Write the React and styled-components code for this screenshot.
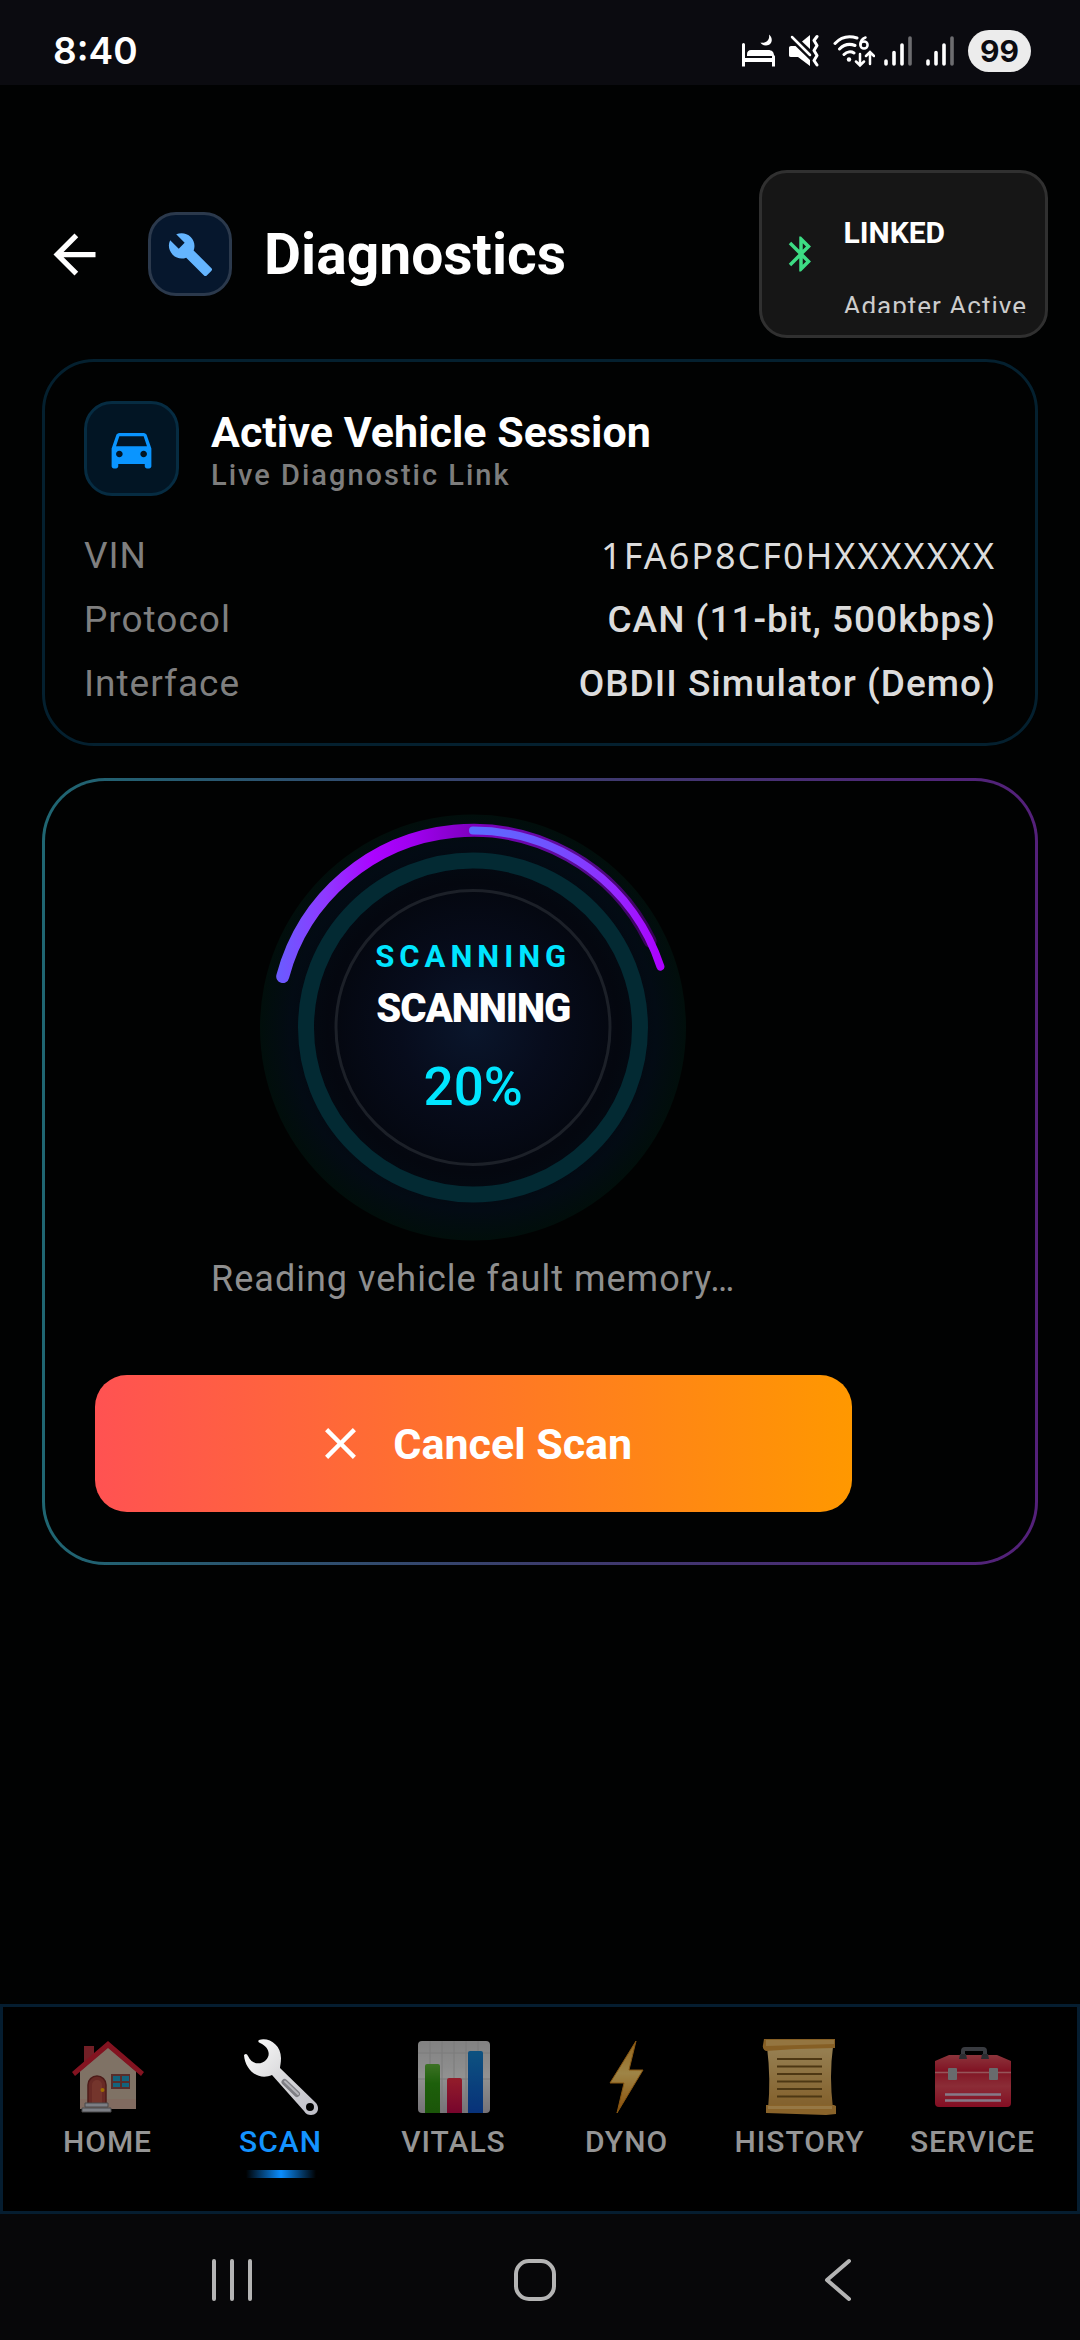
import React from 'react';
import styled, { createGlobalStyle, css } from 'styled-components';

const GlobalStyle = createGlobalStyle`
  *, *::before, *::after { box-sizing: border-box; }
  body {
    margin: 0;
    background: #010202;
    color: #ffffff;
    font-family: Roboto, "Liberation Sans", sans-serif;
  }
  button { font: inherit; color: inherit; border: 0; padding: 0; background: none; }
  h1, h2, p, dl, dd, dt { margin: 0; }
  svg { display: block; flex: none; }
`;

const Screen = styled.div`
  min-height: 100vh;
  display: flex;
  flex-direction: column;
`;

/* ---------- system status bar ---------- */

const StatusBar = styled.div`
  height: 85px;
  padding: 17px 49px 0 53px;
  display: flex;
  align-items: center;
  justify-content: space-between;
  background: #0b0b10;
`;

const Clock = styled.time`
  font-family: Inter, Roboto, sans-serif;
  font-size: 37px;
  line-height: 48px;
  font-weight: 600;
`;

const StatusIcons = styled.div`
  display: flex;
  align-items: center;
  gap: ${(p) => p.$gap}px;
`;

const Battery = styled.span`
  width: 63px;
  height: 42px;
  border-radius: 21px;
  background: #ececec;
  color: #0b0b10;
  font-family: Inter, Roboto, sans-serif;
  font-size: 30px;
  line-height: 42px;
  font-weight: 700;
  text-align: center;
`;

/* ---------- header ---------- */

const Header = styled.header`
  padding: 85px 32px 0 43px;
  display: flex;
  align-items: center;
`;

const BackButton = styled.button`
  margin-right: 42px;
`;

const IconTile = styled.span`
  display: grid;
  place-items: center;
  flex: none;
  width: ${(p) => p.$size}px;
  height: ${(p) => p.$size}px;
  border: 3px solid ${(p) => p.$border};
  border-radius: 28px;
  background: ${(p) => p.$fill};
  color: ${(p) => p.$color};
`;

const Title = styled.h1`
  flex: 1;
  margin-left: 32px;
  padding-top: 2px;
  font-size: 57px;
  line-height: 72px;
  font-weight: 700;
`;

const LinkBadge = styled.div`
  height: 168px;
  padding: 0 18px;
  display: flex;
  align-items: center;
  gap: 21px;
  border: 3px solid #303030;
  border-radius: 28px;
  background: #161616;
  color: #3ddc84;
`;

const LinkText = styled.div`
  height: 118px;
  overflow: hidden;
  color: #cccccc;
  font-size: 26px;
  line-height: 70px;
  letter-spacing: 1px;
`;

const LinkState = styled.p`
  color: #ffffff;
  font-size: 30px;
  line-height: 76px;
  font-weight: 700;
  letter-spacing: 0;
`;

/* ---------- cards ---------- */

const Main = styled.main`
  flex: 1;
  padding: 21px 42px 32px;
  display: flex;
  flex-direction: column;
  gap: 32px;
`;

const SessionCard = styled.section`
  padding: 39px 39px 27px;
  border: 3px solid #04202f;
  border-radius: 52px;
`;

const SessionHead = styled.div`
  display: flex;
  align-items: center;
  gap: 32px;
`;

const SessionNames = styled.div`
  padding-top: 4px;
`;

const SessionTitle = styled.h2`
  font-size: 43px;
  line-height: 48px;
  font-weight: 700;
`;

const SessionSub = styled.p`
  color: #7d7d7d;
  font-size: 29px;
  line-height: 38px;
  font-weight: 500;
  letter-spacing: 2px;
`;

const Facts = styled.dl`
  margin-top: 28px;
`;

const Fact = styled.div`
  display: flex;
  justify-content: space-between;
  font-size: 37px;
  line-height: 64px;
  letter-spacing: 1px;
`;

const FactName = styled.dt`
  color: #7f7f7f;
`;

const FactValue = styled.dd`
  color: #dcdcdc;
  font-weight: 500;
  ${(p) =>
    p.$code &&
    css`
      font-family: "Noto Sans", "Open Sans", sans-serif;
      font-size: 36px;
      font-weight: 400;
      letter-spacing: 2px;
    `}
`;

const ScanCard = styled.section`
  padding: 33px 50px 50px;
  border: 3px solid transparent;
  border-radius: 63px;
  background:
    linear-gradient(#010202, #010202) padding-box,
    linear-gradient(90deg, #1f6672, #3b3d6c 50%, #54207a) border-box;
`;

const ScanColumn = styled.div`
  width: 85%;
  display: flex;
  flex-direction: column;
  align-items: center;
`;

const Gauge = styled.div`
  display: grid;
  place-items: center;
  > * { grid-area: 1 / 1; }
`;

const GaugeText = styled.div`
  padding-top: 4px;
  display: flex;
  flex-direction: column;
  align-items: center;
  text-align: center;
`;

const GaugeLabel = styled.p`
  color: #00e5ff;
  font-size: 31px;
  line-height: 40px;
  font-weight: 700;
  letter-spacing: 5px;
`;

const GaugeState = styled.p`
  margin-top: 8px;
  font-size: 40px;
  line-height: 48px;
  font-weight: 900;
  letter-spacing: -1px;
`;

const GaugePercent = styled.p`
  margin-top: 18px;
  color: #00e5ff;
  font-size: 53px;
  line-height: 72px;
  font-weight: 500;
`;

const ScanMessage = styled.p`
  margin-top: 14px;
  color: #8f8f8f;
  font-size: 36px;
  line-height: 48px;
  letter-spacing: 1px;
`;

const CancelButton = styled.button`
  width: 100%;
  height: 137px;
  margin-top: 72px;
  display: flex;
  align-items: center;
  justify-content: center;
  gap: 26px;
  border-radius: 32px;
  background: linear-gradient(90deg, #ff5252, #ff9800);
  font-size: 43px;
  font-weight: 700;
`;

/* ---------- navigation ---------- */

const TabBar = styled.nav`
  height: 210px;
  padding: 32px 18px 0;
  display: grid;
  grid-template-columns: repeat(6, 1fr);
  border: 3px solid #051d30;
  background: #000000;
`;

const Tab = styled.a`
  display: flex;
  flex-direction: column;
  align-items: center;
  color: ${(p) => (p.$active ? '#1493ff' : '#959595')};
  font-size: 30px;
  line-height: 36px;
  font-weight: 500;
  letter-spacing: 1px;
  text-decoration: none;

  svg {
    margin-bottom: 9px;
    opacity: ${(p) => (p.$active ? 1 : 0.62)};
  }
`;

const TabMark = styled.span`
  width: 70px;
  height: 8px;
  margin-top: 10px;
  background: linear-gradient(90deg, transparent, #0a8dff 50%, transparent);
`;

const SystemNav = styled.div`
  height: 126px;
  padding: 6px 91px 0 80px;
  display: grid;
  grid-template-columns: repeat(3, 1fr);
  place-items: center;
  background: #070709;
  color: #b4b4b4;
`;

/* ---------- drawings ---------- */

const Glyph = ({ size, d }) => (
  <svg width={size} height={size} viewBox="0 0 24 24" fill="currentColor" aria-hidden="true">
    <path d={d} />
  </svg>
);

const ARROW = 'M20 11H7.83l5.59-5.59L12 4l-8 8 8 8 1.41-1.41L7.83 13H20v-2z';
const BUILD =
  'M22.7 19l-9.1-9.1c.9-2.3.4-5-1.5-6.9-2-2-5-2.4-7.4-1.3L9 6 6 9 1.6 4.7C.4 7.1.9 10.1 2.9 12.1c1.9 1.9 4.6 2.4 6.9 1.5l9.1 9.1c.4.4 1 .4 1.4 0l2.3-2.3c.5-.4.5-1.1.1-1.4z';
const BLUETOOTH =
  'M17.71 7.71L12 2h-1v7.59L6.41 5 5 6.41 10.59 12 5 17.59 6.41 19 11 14.41V22h1l5.71-5.71-4.3-4.29 4.3-4.29zM13 5.83l1.88 1.88L13 9.59V5.83zm1.88 10.46L13 18.17v-3.76l1.88 1.88z';
const CAR =
  'M18.92 6.01C18.72 5.42 18.16 5 17.5 5h-11c-.66 0-1.21.42-1.42 1.01L3 12v8c0 .55.45 1 1 1h1c.55 0 1-.45 1-1v-1h12v1c0 .55.45 1 1 1h1c.55 0 1-.45 1-1v-8l-2.08-5.99zM6.5 16c-.83 0-1.5-.67-1.5-1.5S5.67 13 6.5 13s1.5.67 1.5 1.5S7.33 16 6.5 16zm11 0c-.83 0-1.5-.67-1.5-1.5s.67-1.5 1.5-1.5 1.5.67 1.5 1.5-.67 1.5-1.5 1.5zM5 11l1.5-4.5h11L19 11H5z';
const CLOSE =
  'M19 6.41L17.59 5 12 10.59 6.41 5 5 6.41 10.59 12 5 17.59 6.41 19 12 13.41 17.59 19 19 17.59 13.41 12z';

const BedIcon = () => (
  <svg width="34" height="34" viewBox="0 0 34 34" fill="#fff" aria-hidden="true">
    <path d="M1 10.500a1.500 1.500 0 0 1 3 0V24h27v-1.500a1.500 1.500 0 0 1 3 0V32.500h-3V28H4v4.500H1z" />
    <path d="M6 22v-1.500c0-3 1.500-4.500 4-4.500h17c4 0 6 2 6 6z" />
    <path d="M28 .5c4.500 3.500 3.500 11-3 11-2.500 0-4.500-1-5.500-3C25 9.500 29 6 28 .5z" />
  </svg>
);

const MuteIcon = () => (
  <svg width="30" height="34" viewBox="0 0 30 34" fill="none" stroke="#fff" aria-hidden="true">
    <path d="M0 13.500Q0 12 2 12h4.500l14.500 14V32L9 23H2q-2 0-2-1.500zM13 7.500l8-6.500v14z" fill="#fff" stroke="none" />
    <path d="M3 3l18 18" strokeWidth="2.500" strokeLinecap="round" />
    <path d="M28 2.500l-3 4 3 5-3 5 3 5-3 5 3 4.500" strokeWidth="3" strokeLinecap="round" strokeLinejoin="round" />
  </svg>
);

const WifiIcon = () => (
  <svg width="42" height="34" viewBox="0 0 42 34" fill="none" stroke="#fff" strokeWidth="3" strokeLinecap="round" aria-hidden="true">
    <path d="M2 9.500C8 3 16 1.500 24 4M6.500 15C11 10.500 17 9.500 22 11.500M11 20.500C14 17.500 18 17 21 19" />
    <circle cx="16" cy="25.500" r="2.200" fill="#fff" stroke="none" />
    <path d="M32.500 3.500C29.500 4.500 27.500 7 27.500 10.500" strokeWidth="2.500" />
    <circle cx="31" cy="11" r="3.600" strokeWidth="2.500" />
    <path d="M27 20v11M23 27.500l4 4 4-4M37 30V19M33 22l4-4 4 4" strokeWidth="2.500" />
  </svg>
);

const SignalIcon = () => (
  <svg width="28" height="34" viewBox="0 0 28 34" stroke="#fff" strokeWidth="3.600" strokeLinecap="round" aria-hidden="true">
    <path d="M2 27v3M10 18.500V30M18 11v19" />
    <path d="M26 4v26" opacity=".4" />
  </svg>
);

const polar = (angle, r = 197, c = 213) => {
  const rad = ((angle - 90) * Math.PI) / 180;
  return `${(c + r * Math.cos(rad)).toFixed(1)} ${(c + r * Math.sin(rad)).toFixed(1)}`;
};
const arc = (from, to) => `M${polar(from)}A197 197 0 0 1 ${polar(to)}`;

const GaugeRing = ({ percent }) => (
  <svg width="426" height="427" viewBox="0 0 426 426" fill="none" aria-hidden="true">
    <defs>
      <radialGradient id="disc">
        <stop offset="0" stopColor="#0a162c" />
        <stop offset=".35" stopColor="#070c1c" />
        <stop offset=".68" stopColor="#04070f" />
        <stop offset=".86" stopColor="#030b14" />
        <stop offset="1" stopColor="#010e0b" />
      </radialGradient>
      <linearGradient id="sweep" gradientUnits="userSpaceOnUse" x1="20" y1="0" x2="406" y2="0">
        <stop offset="0" stopColor="#6c5aff" />
        <stop offset=".12" stopColor="#8f38ff" />
        <stop offset=".24" stopColor="#ab04ff" />
        <stop offset=".34" stopColor="#a000f0" />
        <stop offset=".5" stopColor="#7d00bd" />
        <stop offset=".75" stopColor="#5c0a98" />
        <stop offset="1" stopColor="#30004a" />
      </linearGradient>
      <linearGradient id="progress" gradientUnits="userSpaceOnUse" x1="213" y1="0" x2="402" y2="0">
        <stop offset="0" stopColor="#5b6cff" />
        <stop offset=".4" stopColor="#7052ff" />
        <stop offset=".75" stopColor="#9427ff" />
        <stop offset="1" stopColor="#ad00ff" />
      </linearGradient>
    </defs>
    <circle cx="213" cy="213" r="213" fill="url(#disc)" />
    <circle cx="213" cy="213" r="167" stroke="#032a33" strokeWidth="16" />
    <circle cx="213" cy="213" r="137" stroke="#1c2028" strokeWidth="3" />
    <path d={arc(-75, 64)} stroke="url(#sweep)" strokeWidth="13" strokeLinecap="round" />
    <path d={arc(0, percent * 3.6)} stroke="url(#progress)" strokeWidth="8" strokeLinecap="round" />
  </svg>
);

const HomeArt = () => (
  <svg width="76" height="76" viewBox="0 0 76 76" aria-hidden="true">
    <path d="M14 7h10v20H14z" fill="#b8323e" />
    <path d="M10 32L38 8l28 24v38H10z" fill="#cdb9a4" />
    <path d="M10 60h56v10H10z" fill="#d3a597" opacity=".6" />
    <path d="M38 2L2 33l3 4 33-28 33 28 3-4z" fill="#d31f35" />
    <path d="M18 66V46a9 9 0 0 1 18 0v20z" fill="#a8443c" stroke="#7c2c28" strokeWidth="1.500" />
    <path d="M22 64V46a5 5 0 0 1 10 0v18z" fill="#bb5648" />
    <circle cx="32.500" cy="51" r="2" fill="#ffb000" />
    <path d="M41 35h19v15H41z" fill="#8f4a44" />
    <path d="M43 37h7v5h-7zM52 37h7v5h-7zM43 44h7v4h-7zM52 44h7v4h-7z" fill="#1fa0c8" />
    <path d="M15 64h23v4H15zM12 69h29v4H12z" fill="#c9ccd6" stroke="#777" />
  </svg>
);

const WrenchArt = () => (
  <svg width="76" height="76" viewBox="0 0 76 76" aria-hidden="true">
    <defs>
      <linearGradient id="steel" x1="0" y1="0" x2="1" y2="1">
        <stop offset="0" stopColor="#ffffff" />
        <stop offset=".45" stopColor="#dcdcde" />
        <stop offset="1" stopColor="#bdbdc6" />
      </linearGradient>
    </defs>
    <path
      fillRule="evenodd"
      fill="url(#steel)"
      d="M16 1C26-2 38 6 38 19c0 5-1 8-1 10L73 64c4 5 2 12-5 12-3 0-5-1-7-4L29 36C15 42 2 31 1 16c2-2 3-1 4 1 4 9 13 9 18 4S26 8 17 4c-2-1-2-2-1-3zM67 64a4 4 0 1 0 0 8 4 4 0 0 0 0-8z"
    />
    <path d="M41.500 43L54 55" stroke="#7f7f85" strokeWidth="6" strokeLinecap="round" />
    <path d="M42 42.500L55 55" stroke="#b5b5ba" strokeWidth="2" strokeLinecap="round" />
  </svg>
);

const ChartArt = () => (
  <svg width="76" height="76" viewBox="0 0 76 76" aria-hidden="true">
    <defs>
      <linearGradient id="paper" x1="0" y1="0" x2="0" y2="1">
        <stop offset="0" stopColor="#d2d2d2" />
        <stop offset=".5" stopColor="#eaeaea" />
        <stop offset="1" stopColor="#bdb8c0" />
      </linearGradient>
      <linearGradient id="barGreen" x1="0" y1="0" x2="0" y2="1">
        <stop offset="0" stopColor="#62b83c" />
        <stop offset=".4" stopColor="#2f9a12" />
        <stop offset="1" stopColor="#2d8a10" />
      </linearGradient>
      <linearGradient id="barRed" x1="0" y1="0" x2="0" y2="1">
        <stop offset="0" stopColor="#ee2f45" />
        <stop offset="1" stopColor="#c00848" />
      </linearGradient>
      <linearGradient id="barBlue" x1="0" y1="0" x2="0" y2="1">
        <stop offset="0" stopColor="#1685cf" />
        <stop offset="1" stopColor="#0c50c4" />
      </linearGradient>
    </defs>
    <rect x="2" y="2" width="72" height="72" rx="4" fill="url(#paper)" />
    <path d="M2 14h72M14 2v72M26 2v72M38 2v72M50 2v72M62 2v72M2 40h72" stroke="#c6c6c6" />
    <path d="M9 74V27q0-2 2-2h11q2 0 2 2v47z" fill="url(#barGreen)" />
    <path d="M31 74V41q0-2 2-2h11q2 0 2 2v33z" fill="url(#barRed)" />
    <path d="M52 74V14q0-2 2-2h11q2 0 2 2v60z" fill="url(#barBlue)" />
  </svg>
);

const BoltArt = () => (
  <svg width="76" height="76" viewBox="0 0 76 76" aria-hidden="true">
    <defs>
      <linearGradient id="bolt" x1="0" y1="0" x2="0" y2="1">
        <stop offset="0" stopColor="#f2a52c" />
        <stop offset=".45" stopColor="#ffd672" />
        <stop offset="1" stopColor="#e07d0c" />
      </linearGradient>
    </defs>
    <path d="M47 2L21 44h14l-7 30 26-43H40z" fill="url(#bolt)" stroke="#d98a1c" strokeLinejoin="round" />
  </svg>
);

const ScrollArt = () => (
  <svg width="76" height="76" viewBox="0 0 76 76" aria-hidden="true">
    <defs>
      <linearGradient id="scroll" x1="0" y1="0" x2="0" y2="1">
        <stop offset="0" stopColor="#f3cf86" />
        <stop offset="1" stopColor="#d29a45" />
      </linearGradient>
    </defs>
    <path d="M5 8h66q-4 28 0 62H6q3-30-1-62z" fill="url(#scroll)" />
    <path d="M2 0h71v9L34 10 4 12Q0 10 1 6z" fill="#d99a3c" />
    <path d="M4 1h68v4L4 7z" fill="#efbd68" />
    <path d="M4 66h68l2 1v8l-10 1-60-2z" fill="#dda045" />
    <path d="M6 67h64v3H6z" fill="#f2c270" />
    <path d="M15 20h45M15 27.500h45M15 35h45M15 42.500h45M15 50h45M15 57.500h45" stroke="#7d5a20" strokeWidth="2" />
  </svg>
);

const ToolboxArt = () => (
  <svg width="76" height="76" viewBox="0 0 76 76" aria-hidden="true">
    <defs>
      <linearGradient id="box" x1="0" y1="0" x2="0" y2="1">
        <stop offset="0" stopColor="#e25560" />
        <stop offset=".3" stopColor="#d0203a" />
        <stop offset=".6" stopColor="#e04858" />
        <stop offset="1" stopColor="#d41638" />
      </linearGradient>
    </defs>
    <path d="M28 18v-6q0-2 2-2h18q2 0 2 2v6" fill="none" stroke="#5d6068" strokeWidth="4" />
    <path d="M14 16h48l14 6v42q0 4-4 4H4q-4 0-4-4V22z" fill="url(#box)" />
    <path d="M0 33.500h76" stroke="#f08a92" strokeWidth="1.500" />
    <path d="M25 15h6l1 5h-8zM47 15h6l1 5h-8z" fill="#46484e" />
    <rect x="13" y="29" width="9" height="12" rx="1" fill="#a9adb0" />
    <rect x="54" y="29" width="9" height="12" rx="1" fill="#a9adb0" />
    <path d="M10 55.500h56M10 61.500h56" stroke="#d8c6dc" strokeWidth="2.500" />
  </svg>
);

const LineIcon = ({ d, children }) => (
  <svg width="44" height="44" viewBox="0 0 44 44" fill="none" stroke="currentColor" strokeWidth="4" strokeLinecap="round" strokeLinejoin="round" aria-hidden="true">
    {d && <path d={d} />}
    {children}
  </svg>
);

/* ---------- data ---------- */

const facts = [
  { name: 'VIN', value: '1FA6P8CF0HXXXXXXX', code: true },
  { name: 'Protocol', value: 'CAN (11-bit, 500kbps)' },
  { name: 'Interface', value: 'OBDII Simulator (Demo)' },
];

const tabs = [
  { label: 'HOME', Art: HomeArt },
  { label: 'SCAN', Art: WrenchArt, active: true },
  { label: 'VITALS', Art: ChartArt },
  { label: 'DYNO', Art: BoltArt },
  { label: 'HISTORY', Art: ScrollArt },
  { label: 'SERVICE', Art: ToolboxArt },
];

export default function App() {
  const percent = 20;
  return (
    <Screen>
      <GlobalStyle />
      <StatusBar>
        <Clock>8:40</Clock>
        <StatusIcons $gap={14}>
          <BedIcon />
          <MuteIcon />
          <StatusIcons $gap={9}>
            <WifiIcon />
            <SignalIcon />
          </StatusIcons>
          <SignalIcon />
          <Battery>99</Battery>
        </StatusIcons>
      </StatusBar>

      <Header>
        <BackButton type="button" aria-label="Back">
          <Glyph size={63} d={ARROW} />
        </BackButton>
        <IconTile $size={84} $fill="#06172d" $border="#2b394c" $color="#64b5ff">
          <Glyph size={47} d={BUILD} />
        </IconTile>
        <Title>Diagnostics</Title>
        <LinkBadge>
          <Glyph size={42} d={BLUETOOTH} />
          <LinkText>
            <LinkState>LINKED</LinkState>
            <p>Adapter Active</p>
          </LinkText>
        </LinkBadge>
      </Header>

      <Main>
        <SessionCard>
          <SessionHead>
            <IconTile $size={95} $fill="#021524" $border="#062c42" $color="#0a95ff">
              <Glyph size={53} d={CAR} />
            </IconTile>
            <SessionNames>
              <SessionTitle>Active Vehicle Session</SessionTitle>
              <SessionSub>Live Diagnostic Link</SessionSub>
            </SessionNames>
          </SessionHead>
          <Facts>
            {facts.map((f) => (
              <Fact key={f.name}>
                <FactName>{f.name}</FactName>
                <FactValue $code={f.code}>{f.value}</FactValue>
              </Fact>
            ))}
          </Facts>
        </SessionCard>

        <ScanCard>
          <ScanColumn>
            <Gauge>
              <GaugeRing percent={percent} />
              <GaugeText>
                <GaugeLabel>SCANNING</GaugeLabel>
                <GaugeState>SCANNING</GaugeState>
                <GaugePercent>{percent}%</GaugePercent>
              </GaugeText>
            </Gauge>
            <ScanMessage>Reading vehicle fault memory…</ScanMessage>
            <CancelButton type="button">
              <Glyph size={53} d={CLOSE} />
              Cancel Scan
            </CancelButton>
          </ScanColumn>
        </ScanCard>
      </Main>

      <TabBar>
        {tabs.map(({ label, Art, active }) => (
          <Tab key={label} href={`#${label.toLowerCase()}`} $active={active} aria-current={active ? 'page' : undefined}>
            <Art />
            {label}
            {active && <TabMark />}
          </Tab>
        ))}
      </TabBar>

      <SystemNav>
        <button type="button" aria-label="Recent apps">
          <LineIcon d="M4 3v38M22 3v38M40 3v38" />
        </button>
        <button type="button" aria-label="Home screen">
          <LineIcon>
            <rect x="3" y="3" width="38" height="38" rx="13" />
          </LineIcon>
        </button>
        <button type="button" aria-label="System back">
          <LineIcon d="M33 3L11 22l22 19" />
        </button>
      </SystemNav>
    </Screen>
  );
}
